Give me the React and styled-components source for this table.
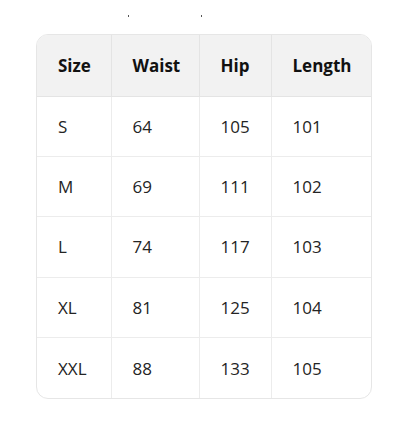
import React from "react";
import styled, { createGlobalStyle } from "styled-components";

const GlobalStyle = createGlobalStyle`
  body {
    margin: 0;
    background: #ffffff;
    font-family: "Open Sans", "Noto Sans", sans-serif;
  }
`;

const rows = [
  ["S", "64", "105", "101"],
  ["M", "69", "111", "102"],
  ["L", "74", "117", "103"],
  ["XL", "81", "125", "104"],
  ["XXL", "88", "133", "105"],
];

const headers = ["Size", "Waist", "Hip", "Length"];
const widths = [74, 88, 72];

const App = () => {
  return (
    <Page>
      <GlobalStyle />
      <Specks>
        <Speck />
        <Speck />
      </Specks>
      <Card>
        <Table>
          <colgroup>
            {widths.map((w, i) => (
              <col key={i} style={{ width: w }} />
            ))}
            <col />
          </colgroup>
          <thead>
            <tr>
              {headers.map((h, i) => (
                <HeadCell key={h} $last={i === headers.length - 1}>
                  {h}
                </HeadCell>
              ))}
            </tr>
          </thead>
          <tbody>
            {rows.map((row, r) => (
              <tr key={row[0]}>
                {row.map((v, i) => (
                  <Cell
                    key={i}
                    $last={i === row.length - 1}
                    $bottom={r === rows.length - 1}
                  >
                    {v}
                  </Cell>
                ))}
              </tr>
            ))}
          </tbody>
        </Table>
      </Card>
    </Page>
  );
};

export default App;

const Page = styled.div`
  padding: 14px 0 0 36px;
`;

const Specks = styled.div`
  display: flex;
  gap: 72px;
  padding-left: 92px;
  height: 20px;
`;

const Speck = styled.span`
  width: 1px;
  height: 2px;
  background: #555;
  margin-top: 1px;
`;

const Card = styled.div`
  width: 334px;
  border: 1px solid #e6e6e6;
  border-radius: 12px;
  overflow: hidden;
`;

const Table = styled.table`
  width: 100%;
  border-collapse: collapse;
  table-layout: fixed;
  font-size: 17px;
  color: #242424;
`;

const HeadCell = styled.th`
  height: 61px;
  padding: 0 0 0 21px;
  text-align: left;
  font-weight: 700;
  color: #111;
  background: #f2f2f2;
  border-right: ${(p) => (p.$last ? "none" : "1px solid #e4e4e4")};
  border-bottom: 1px solid #e4e4e4;
  box-sizing: border-box;
`;

const Cell = styled.td`
  height: 60.4px;
  padding: 0 0 0 21px;
  text-align: left;
  border-right: ${(p) => (p.$last ? "none" : "1px solid #ececec")};
  border-bottom: ${(p) => (p.$bottom ? "none" : "1px solid #ececec")};
  box-sizing: border-box;
`;
